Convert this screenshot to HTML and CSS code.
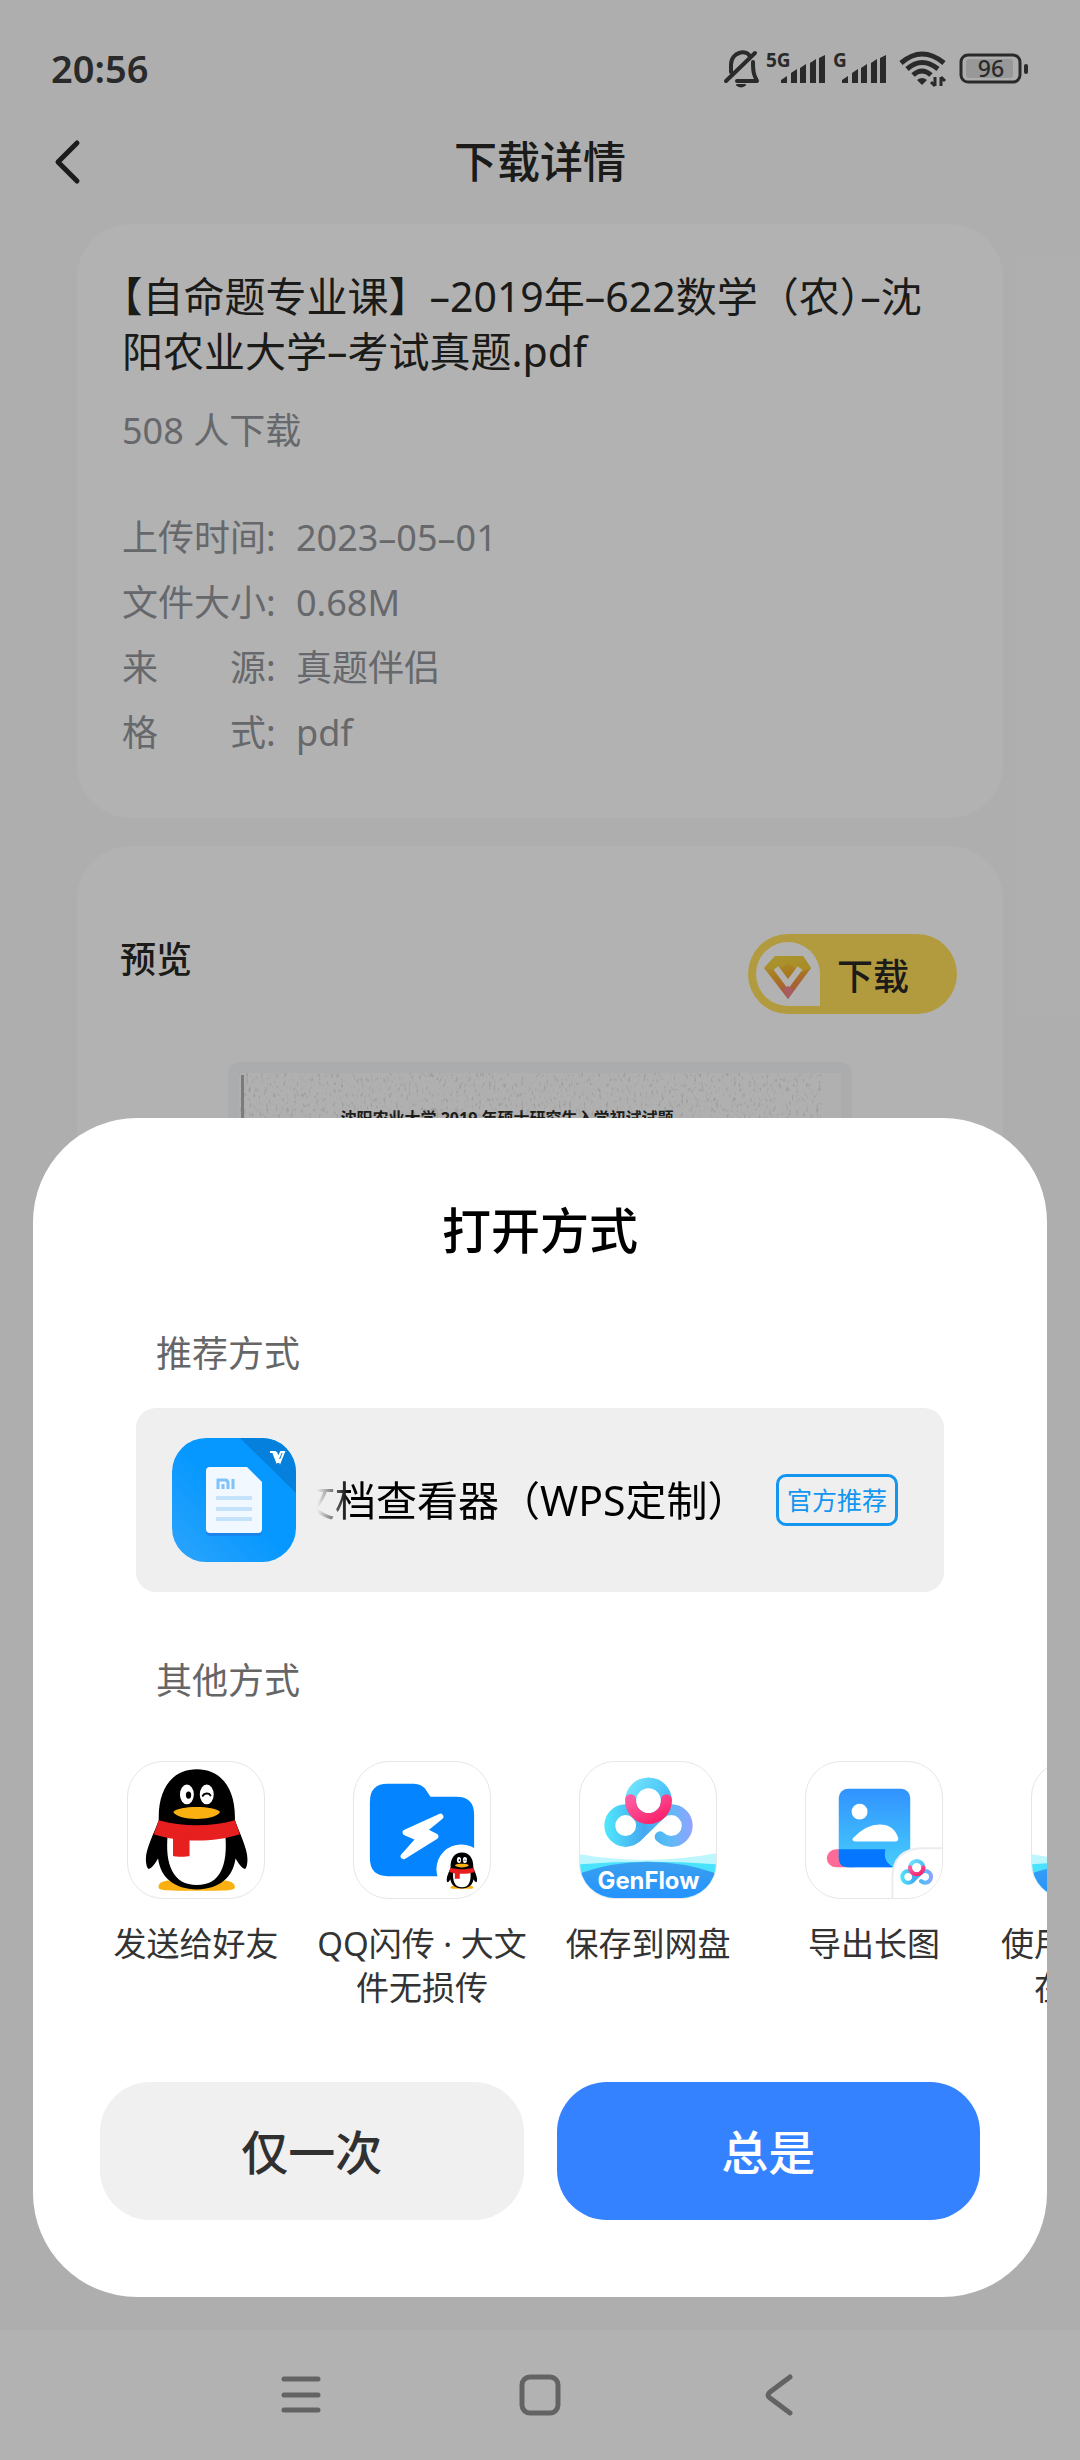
FILE: index.html
```html
<!DOCTYPE html>
<html lang="zh-CN">
<head>
  <meta charset="UTF-8">
  <meta name="viewport" content="width=device-width, initial-scale=1.0">
  <title>下载详情</title>
  <link rel="stylesheet" href="styles.css">
</head>
<body>
  <!-- shared logo shapes -->
  <svg class="defs" width="0" height="0" aria-hidden="true">
    <defs>
      <linearGradient id="panBlue" gradientUnits="userSpaceOnUse" x1="24" y1="60" x2="114" y2="60">
        <stop offset="0" stop-color="#4fe9fd"/>
        <stop offset="0.45" stop-color="#45a8ef"/>
        <stop offset="0.7" stop-color="#55bdf5"/>
        <stop offset="1" stop-color="#92a2ff"/>
      </linearGradient>
      <linearGradient id="panTop" gradientUnits="userSpaceOnUse" x1="46" y1="20" x2="92" y2="45">
        <stop offset="0" stop-color="#75e8fb"/>
        <stop offset="1" stop-color="#3fb8f8"/>
      </linearGradient>
      <linearGradient id="panPink" x1="0" y1="0" x2="1" y2="1">
        <stop offset="0" stop-color="#fd5aa0"/>
        <stop offset="1" stop-color="#fb1f68"/>
      </linearGradient>
      <linearGradient id="wave" x1="0" y1="0" x2="0" y2="1">
        <stop offset="0" stop-color="#3a9fee"/>
        <stop offset="1" stop-color="#2593ff"/>
      </linearGradient>
      <symbol id="penguin" viewBox="0 0 411 411">
        <path d="M92 378c0-18 25-24 58-18h116c33-6 57 2 57 18 0 8-12 11-55 11H150c-46 0-58-3-58-11z" fill="#fbb012"/>
        <path d="M93 175C90 80 135 22 208 22s118 58 115 153c14 40 38 85 38 118 0 18-4 30-8 30-7 0-18-14-28-31-8 58-50 93-117 93S98 350 91 292c-10 17-21 31-28 31-4 0-9-12-9-30 0-33 25-78 39-118z" fill="#000"/>
        <path d="M120 220h174c8 90-14 152-86 152s-97-62-88-152z" fill="#fff"/>
        <path d="M93 176c70 20 160 20 230 0l15 42c-80 26-180 26-260 0z" fill="#e81f1f"/>
        <path d="M136 215h50v68c0 4-50 4-50 0z" fill="#e81f1f"/>
        <ellipse cx="178" cy="98" rx="21" ry="30" fill="#fff"/>
        <ellipse cx="238" cy="98" rx="21" ry="30" fill="#fff"/>
        <ellipse cx="183" cy="100" rx="8" ry="11" fill="#000"/>
        <path d="M226 102c4-8 19-9 23-1" fill="none" stroke="#000" stroke-width="6" stroke-linecap="round"/>
        <path d="M137 151c15-20 126-20 141 0-15 28-126 28-141 0z" fill="#fbb012"/>
      </symbol>
      <symbol id="pan" viewBox="22 12 94 76">
        <g fill="none" stroke-width="11" stroke-linecap="round">
          <circle cx="69" cy="39" r="18" stroke="url(#panTop)"/>
          <circle cx="46" cy="64" r="16" stroke="url(#panBlue)"/>
          <path d="M57.3 75.3L80.7 52.7A16 16 0 1 1 80.7 75.3" stroke="url(#panBlue)"/>
          <path d="M51 38v1a18 18 0 0 0 36 0v-1" stroke="url(#panPink)"/>
        </g>
      </symbol>
      <symbol id="genflow" viewBox="0 0 137 137">
        <use href="#pan" x="22" y="12" width="94" height="76"/>
        <path d="M0 93Q68 105 137 92V137H0z" fill="#bdf6fd"/>
        <path d="M0 103Q68 98 137 103V137H0z" fill="#4ae2fd"/>
        <path d="M0 112Q68 89 137 112V137H0z" fill="url(#wave)"/>
        <text x="69" y="128" text-anchor="middle" class="genflow-text">GenFlow</text>
      </symbol>
      <symbol id="bars" viewBox="0 0 44 28">
        <path d="M0 28v-3l6-4v7zM10 28V18l6-4v14zM19 28V13l6-4v19zM29 28V8l6-4v24zM38 28V3l6-3v28z"/>
      </symbol>
    </defs>
  </svg>

  <div class="screen">
    <div class="status-bar">
      <span class="clock">20:56</span>
      <div class="status-icons">
        <svg width="36" height="40" viewBox="0 0 36 40" fill="none" stroke="#3d3d3d" stroke-width="4" stroke-linecap="round" stroke-linejoin="round">
          <path d="M8 23V16C8 2 25 0 27 8M30 13c0 11 1 13 4 19H14"/>
          <path d="M3 32L32 4"/>
          <path d="M14 36h8q-4 3-8 0z" fill="#3d3d3d" stroke-width="2"/>
        </svg>
        <svg width="60" height="40" viewBox="0 0 60 40" fill="#3d3d3d">
          <text x="0" y="18" class="net-text">5G</text>
          <use href="#bars" x="15" y="6" width="44" height="28"/>
        </svg>
        <svg width="54" height="40" viewBox="0 0 54 40" fill="#3d3d3d">
          <text x="0" y="18" class="net-text">G</text>
          <use href="#bars" x="9" y="6" width="44" height="28"/>
        </svg>
        <svg class="wifi" width="48" height="40" viewBox="0 0 48 40" fill="none" stroke="#3d3d3d" stroke-width="5">
          <path d="M2 14Q23-4 45 14M8 20Q23 7 39 20M14 26Q23 18 32 26"/>
          <path d="M18 31q5-4 10 0l-5 5z" fill="#3d3d3d" stroke="none"/>
          <path d="M36 28v9M36 37l-4-4M42 37v-9M42 28l4 4" stroke-width="3"/>
        </svg>
        <svg width="70" height="40" viewBox="0 0 70 40">
          <rect x="2" y="6" width="59" height="27" rx="7" fill="none" stroke="#3d3d3d" stroke-width="3"/>
          <rect x="7" y="10" width="47" height="19" rx="3" fill="#dadada"/>
          <rect x="65" y="15" width="4" height="10" rx="2" fill="#3d3d3d"/>
          <text x="32" y="28" text-anchor="middle" class="battery-text">96</text>
        </svg>
      </div>
    </div>

    <header class="header">
      <button type="button" class="back" aria-label="返回">
        <svg width="28" height="46" viewBox="0 0 28 46" fill="none" stroke="#272725" stroke-width="5" stroke-linecap="round" stroke-linejoin="round">
          <path d="M24 4L5 23L24 42"/>
        </svg>
      </button>
      <h1>下载详情</h1>
    </header>

    <main class="content">
      <section class="card info">
        <h2><span class="half">【</span>自命题专业课】–2019年–622数学（农<span class="half">）</span>–沈阳农业大学–考试真题.pdf</h2>
        <p class="count">508 人下载</p>
        <dl>
          <div class="row"><dt>上传时间:</dt><dd>2023–05–01</dd></div>
          <div class="row"><dt>文件大小:</dt><dd>0.68M</dd></div>
          <div class="row"><dt>来　　源:</dt><dd>真题伴侣</dd></div>
          <div class="row"><dt>格　　式:</dt><dd>pdf</dd></div>
        </dl>
      </section>

      <section class="card preview">
        <div class="preview-head">
          <h3>预览</h3>
          <button type="button" class="download">
            <svg width="64" height="64" viewBox="0 0 64 64">
              <defs>
                <linearGradient id="gem" x1="0" y1="0" x2="0.3" y2="1">
                  <stop offset="0" stop-color="#f6dc5a"/>
                  <stop offset="0.5" stop-color="#f3b02c"/>
                  <stop offset="1" stop-color="#ee7460"/>
                </linearGradient>
              </defs>
              <path d="M32 0a32 32 0 0 1 32 32v32H32A32 32 0 0 1 32 0z" fill="#fff"/>
              <path d="M19 14h28l8 12-23 31L8 26z" fill="url(#gem)"/>
              <path d="M19 14h28l8 12-9 4-14-8-14 6-10-2z" fill="#f2d43c" opacity="0.7"/>
              <path d="M20 26l12 16 12-16" fill="none" stroke="#fff" stroke-width="6"/>
              <path d="M27 47l5-3 6 4-6 9z" fill="#f0858a"/>
            </svg>
            下载
          </button>
        </div>
        <div class="paper">
          <div class="sheet-page">
            <svg class="grain" width="100%" height="100%" aria-hidden="true">
              <filter id="noise">
                <feTurbulence type="fractalNoise" baseFrequency="0.4 0.2" numOctaves="2" seed="4"/>
                <feColorMatrix values="0 0 0 0 0.4  0 0 0 0 0.4  0 0 0 0 0.4  3 0 0 0 -1.7"/>
              </filter>
              <rect width="88%" height="100%" filter="url(#noise)"/>
              <rect x="2" y="2" width="3" height="100%" fill="#666"/>
            </svg>
            <p>沈阳农业大学 2019 年硕士研究生入学初试试题</p>
          </div>
        </div>
      </section>
    </main>

    <nav class="nav-bar">
      <button type="button" aria-label="最近任务">
        <svg width="44" height="44" viewBox="0 0 44 44" stroke="#8f8f8f" stroke-width="5" stroke-linecap="round">
          <path d="M5 6h34M5 22h34M5 37h34"/>
        </svg>
      </button>
      <button type="button" aria-label="主屏幕">
        <svg width="44" height="44" viewBox="0 0 44 44" fill="none" stroke="#8f8f8f" stroke-width="5">
          <rect x="4" y="4" width="36" height="36" rx="8"/>
        </svg>
      </button>
      <button type="button" aria-label="返回上一页">
        <svg width="44" height="44" viewBox="0 0 44 44" fill="none" stroke="#8f8f8f" stroke-width="5" stroke-linecap="round">
          <path d="M33 4L13 19Q9 22 13 25L33 40"/>
        </svg>
      </button>
    </nav>

    <div class="mask"></div>

    <div class="sheet" role="dialog" aria-labelledby="sheetTitle">
      <h2 id="sheetTitle">打开方式</h2>
      <h3>推荐方式</h3>
      <button type="button" class="recommend">
        <svg width="124" height="124" viewBox="0 0 124 124">
          <defs>
            <linearGradient id="docBg" x1="1" y1="0" x2="0" y2="1">
              <stop offset="0.5" stop-color="#0698ff"/>
              <stop offset="1" stop-color="#2da4fb"/>
            </linearGradient>
            <clipPath id="docClip"><rect width="124" height="124" rx="34"/></clipPath>
          </defs>
          <g clip-path="url(#docClip)">
            <rect width="124" height="124" fill="url(#docBg)"/>
            <path d="M68 0h56v55z" fill="#0580dc"/>
            <path d="M98 14h5l2 9 4-9h3l-4 10-3 0-4-10M104 14l4 10 4-10" fill="none" stroke="#fff" stroke-width="2"/>
            <path d="M38 31h37l15 15v48q0 4-4 4H38q-4 0-4-4V35q0-4 4-4z" fill="#1b85ee"/>
            <path d="M38 29h37l15 15v47q0 4-4 4H38q-4 0-4-4V33q0-4 4-4z" fill="#f2f8ff"/>
            <path d="M46 51V42h7q3 0 3 3v6M51 46v5M61 41v10" fill="none" stroke="#7fc3f8" stroke-width="3"/>
            <path d="M44 60h36M44 71h36M44 81h36" stroke="#c5e2fb" stroke-width="4"/>
          </g>
        </svg>
        <span class="app-name"><span>文档查看器（WPS定制<span class="half">）</span></span></span>
        <span class="badge">官方推荐</span>
      </button>

      <h3>其他方式</h3>
      <ul class="apps">
        <li>
          <a href="#">
            <span class="icon"><svg viewBox="0 0 137 137"><use href="#penguin" width="137" height="137"/></svg></span>
            发送给好友
          </a>
        </li>
        <li>
          <a href="#">
            <span class="icon">
              <svg viewBox="0 0 137 137">
                <path d="M16 40q0-18 18-18h26q9 0 13 7l4 6h26q18 0 18 18v62H34q-18 0-18-18z" fill="#0485ff"/>
                <path d="M87 55L52 71l14 6-16 18 32-20-12-6z" fill="#fff" stroke="#fff" stroke-width="6" stroke-linejoin="round"/>
                <circle cx="108" cy="108" r="25" fill="#fff"/>
                <use href="#penguin" x="88" y="89" width="41" height="41"/>
              </svg>
            </span>
            QQ闪传 · 大文件无损传
          </a>
        </li>
        <li>
          <a href="#">
            <span class="icon"><svg viewBox="0 0 137 137"><use href="#genflow" width="137" height="137"/></svg></span>
            保存到网盘
          </a>
        </li>
        <li>
          <a href="#">
            <span class="icon">
              <svg viewBox="0 0 137 137">
                <defs>
                  <linearGradient id="photo" x1="0" y1="0" x2="0" y2="1">
                    <stop offset="0" stop-color="#3192ff"/>
                    <stop offset="1" stop-color="#46cdfb"/>
                  </linearGradient>
                </defs>
                <rect x="21" y="88" width="36" height="18" rx="9" fill="#fd6b96"/>
                <rect x="33" y="27" width="72" height="79" rx="9" fill="url(#photo)"/>
                <path d="M33 88h47q-3 12 8 18H42q-9 0-9-9z" fill="#0476ff"/>
                <circle cx="54" cy="50" r="8" fill="#fff"/>
                <path d="M48 76Q61 63 74 63 89 63 93 77q0 3-3 3H49q-4-1-1-4z" fill="#fff"/>
                <path d="M87 140v-22q0-31 31-31h22v53z" fill="#fff" stroke="#ebebf0" stroke-width="2"/>
                <use href="#pan" x="94" y="96" width="35" height="29"/>
              </svg>
            </span>
            导出长图
          </a>
        </li>
        <li>
          <a href="#">
            <span class="icon"><svg viewBox="0 0 137 137"><use href="#genflow" width="137" height="137"/></svg></span>
            使用百度网盘在线打开
          </a>
        </li>
      </ul>

      <div class="actions">
        <button type="button">仅一次</button>
        <button type="button" class="primary">总是</button>
      </div>
    </div>
  </div>
</body>
</html>
```

FILE: styles.css
```css
* {
  box-sizing: border-box;
}
body {
  margin: 0;
  font-family: "Noto Sans", "Noto Sans CJK SC", sans-serif;
  background-color: #fafafa;
  color: #272725;
}
h1, h2, h3, p, dl, dd, ul {
  margin: 0;
  padding: 0;
}
button {
  font-family: inherit;
  color: inherit;
  border: none;
  background: none;
  padding: 0;
  cursor: pointer;
}
svg {
  display: block;
  flex-shrink: 0;
}
.defs {
  position: absolute;
}
.screen {
  position: relative;
  height: 100vh;
  display: flex;
  flex-direction: column;
  overflow: hidden;
}

/* status bar */
.status-bar {
  display: flex;
  justify-content: space-between;
  align-items: center;
  padding: 48px 51px 0;
  height: 90px;
  flex-shrink: 0;
}
.clock {
  font-size: 38px;
  line-height: 40px;
  padding-bottom: 2px;
  font-weight: 600;
  color: #3d3d3d;
}
.status-icons {
  display: flex;
  gap: 7px;
}
.status-icons svg {
  overflow: visible;
}
.wifi {
  margin: 0 5px;
}
.net-text {
  font-size: 19px;
  font-weight: 700;
}
.battery-text {
  font-size: 23px;
  font-weight: 500;
  fill: #3d3d3d;
}

/* header */
.header {
  display: grid;
  grid-template-columns: 80px 1fr 80px;
  align-items: center;
  padding: 10px 53px 0;
  height: 134px;
  flex-shrink: 0;
}
.header h1 {
  text-align: center;
  font-size: 43px;
  line-height: 60px;
  font-weight: 500;
}

/* cards */
.content {
  flex: 1;
  min-height: 0;
  overflow: hidden;
  padding: 0 77px;
}
.card {
  background-color: #fff;
  border-radius: 54px;
}
.info {
  padding: 45px 60px 53px 45px;
  margin-bottom: 28px;
}
.info h2 {
  font-size: 41px;
  line-height: 55px;
  font-weight: 400;
}
.half {
  font-feature-settings: "halt";
}
.count, .row {
  font-size: 36px;
  line-height: 65px;
  color: #92959a;
}
.count {
  margin: 19px 0 42px;
}
.row {
  display: flex;
}
.row dt {
  width: 174px;
}
.preview {
  padding: 88px 46px 0 43px;
  height: 900px;
}
.preview-head {
  display: flex;
  justify-content: space-between;
  align-items: flex-start;
}
.preview-head h3 {
  font-size: 36px;
  line-height: 52px;
  font-weight: 500;
}
.download {
  display: flex;
  align-items: center;
  gap: 17px;
  width: 209px;
  height: 80px;
  padding-left: 8px;
  border-radius: 40px;
  background-color: #ffdd5b;
  font-size: 36px;
  font-weight: 500;
}
.paper {
  margin: 48px 105px 0 108px;
  padding: 11px;
  height: 800px;
  border-radius: 12px;
  background-color: #f5f6f8;
}
.sheet-page {
  position: relative;
  height: 100%;
  padding-top: 33px;
  background-color: #fdfdfd;
}
.sheet-page p {
  font-size: 16px;
  line-height: 24px;
  font-weight: 700;
  text-align: center;
  padding-right: 66px;
}
.grain {
  position: absolute;
  inset: 0;
  opacity: 0.5;
}

/* system navigation */
.nav-bar {
  display: flex;
  justify-content: center;
  align-items: center;
  gap: 195px;
  height: 130px;
  flex-shrink: 0;
  background-color: #fff;
}
.mask {
  position: absolute;
  inset: 0;
  background-color: rgba(0, 0, 0, 0.3);
}

/* bottom sheet */
.sheet {
  position: absolute;
  left: 33px;
  right: 33px;
  bottom: 163px;
  padding: 76px 0 77px;
  border-radius: 104px;
  background-color: #fff;
  overflow: hidden;
}
.sheet h2 {
  text-align: center;
  font-size: 49px;
  line-height: 72px;
  font-weight: 500;
  color: #000;
}
.sheet h3 {
  padding: 0 123px;
  font-size: 36px;
  line-height: 50px;
  font-weight: 400;
  color: #666;
}
.sheet h2 + h3 {
  margin: 63px 0 29px;
}
.recommend {
  display: flex;
  align-items: center;
  width: calc(100% - 206px);
  margin: 0 103px 64px;
  padding: 30px 46px 30px 36px;
  border-radius: 20px;
  background-color: #efefef;
  color: #000;
}
.app-name {
  flex: 1;
  display: flex;
  justify-content: flex-end;
  overflow: hidden;
  margin: 0 48px 0 21px;
  font-size: 41px;
  line-height: 60px;
  white-space: nowrap;
  mask-image: linear-gradient(to right, transparent, #000 32px);
}
.badge {
  padding: 0 8px;
  border: 3px solid #1296f0;
  border-radius: 10px;
  font-size: 25px;
  line-height: 46px;
  color: #1296f0;
}
.genflow-text {
  font-family: Inter, sans-serif;
  font-size: 24px;
  font-weight: 700;
  fill: #fff;
}

/* app list scrolls sideways */
.apps {
  display: flex;
  margin-top: 55px;
  padding-left: 50px;
  list-style: none;
  overflow: hidden;
}
.apps li {
  flex: 0 0 226px;
}
.apps a {
  display: block;
  padding: 0 6px;
  text-align: center;
  font-size: 33px;
  line-height: 44px;
  color: #333;
  text-decoration: none;
}
.icon {
  display: block;
  width: 138px;
  height: 138px;
  margin: 0 auto 23px;
  border: 1px solid #e6e6e6;
  border-radius: 36px;
  overflow: hidden;
}
.actions {
  display: flex;
  gap: 33px;
  padding: 0 67px;
  margin-top: 72px;
}
.actions button {
  flex: 1;
  height: 138px;
  padding-bottom: 4px;
  border-radius: 50px;
  background-color: #f0f0f0;
  font-size: 47px;
  font-weight: 500;
  color: #303030;
}
.actions .primary {
  background-color: #3482ff;
  color: #fff;
}
```
